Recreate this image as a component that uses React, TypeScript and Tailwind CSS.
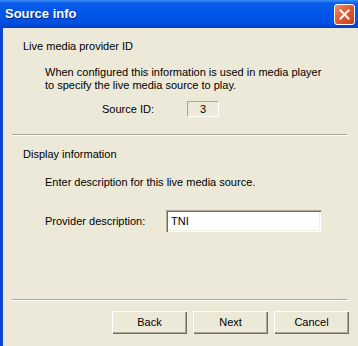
import React from "react";

const font = { fontFamily: '"Liberation Sans", Arial, sans-serif' };

function Btn({ children }: { children: React.ReactNode }) {
  return (
    <div className="w-[75px] h-[23px] flex items-center justify-center bg-[#ece9d8] text-[11px] text-black shadow-[inset_1px_1px_0_#ffffff,inset_-1px_-1px_0_#716f64,inset_-2px_-2px_0_#aca899]">
      {children}
    </div>
  );
}

function Sep() {
  return (
    <div className="ml-[9px] w-[335px]">
      <div className="h-px bg-[#aca899]" />
      <div className="h-px bg-white" />
    </div>
  );
}

export default function App() {
  return (
    <div className="w-[358px] h-[346px] flex flex-col bg-[#ece9d8] overflow-hidden" style={font}>
      <div className="h-[28px] flex items-center justify-between pl-[5px] pr-[3px] bg-[linear-gradient(to_bottom,#3d8ef8_0%,#0a5ce9_12%,#0055ea_45%,#0050e3_80%,#0040c8_100%)]">
        <span className="text-white font-bold text-[13px] [text-shadow:1px_1px_0_#0a2a8a]">
          Source info
        </span>
        <div className="w-[21px] h-[21px] rounded-[3px] border border-white flex items-center justify-center bg-[linear-gradient(135deg,#f09070_0%,#e25c35_45%,#c4401c_100%)]">
          <svg width="11" height="11" viewBox="0 0 11 11">
            <path d="M1.5 1.5 L9.5 9.5 M9.5 1.5 L1.5 9.5" stroke="white" strokeWidth="2" strokeLinecap="square" />
          </svg>
        </div>
      </div>
      <div className="flex flex-1">
        <div className="w-[3px] bg-[#0a46d1]" />
        <div className="flex-1 flex flex-col text-[11px] leading-[13px] text-black">
          <div className="mt-[12px] ml-[20px]">Live media provider ID</div>
          <div className="mt-[13px] ml-[42px]">
            <div>When configured this information is used in media player</div>
            <div>to specify the live media source to play.</div>
          </div>
          <div className="mt-[9px] flex items-center">
            <span className="ml-[99px]">Source ID:</span>
            <div className="ml-auto mr-[139px] w-[32px] h-[16px] flex items-center justify-center border border-t-[#aca899] border-l-[#aca899] border-r-white border-b-white">
              3
            </div>
          </div>
          <div className="mt-[17px]">
            <Sep />
          </div>
          <div className="mt-[12px] ml-[20px]">Display information</div>
          <div className="mt-[15px] ml-[42px]">Enter description for this live media source.</div>
          <div className="mt-[21px] flex items-center">
            <span className="ml-[42px]">Provider description:</span>
            <div className="ml-auto mr-[37px] w-[155px] h-[22px] bg-white flex items-center pl-[5px] shadow-[inset_1px_1px_0_#aca899,inset_2px_2px_0_#716f64,inset_-1px_-1px_0_#ffffff,inset_-2px_-2px_0_#f1efe2]">
              TNI
            </div>
          </div>
          <div className="mt-[67px]">
            <Sep />
          </div>
          <div className="mt-[10px] flex gap-[6px] ml-[109px]">
            <Btn>Back</Btn>
            <Btn>Next</Btn>
            <Btn>Cancel</Btn>
          </div>
        </div>
      </div>
    </div>
  );
}
